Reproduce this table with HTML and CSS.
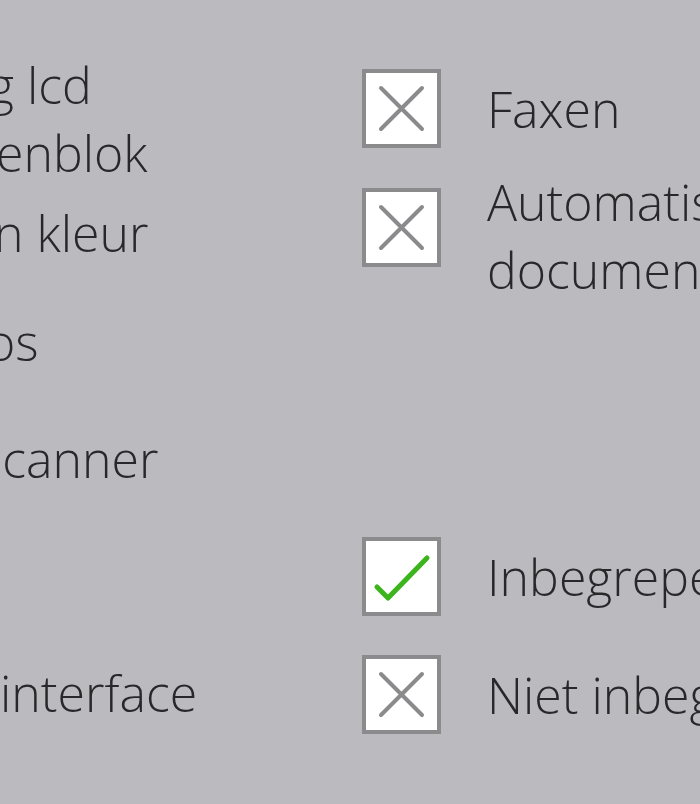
FILE: index.html
```html
<!DOCTYPE html>
<html lang="nl">
<head>
    <meta charset="UTF-8">
    <meta name="viewport" content="width=device-width, initial-scale=1.0">
    <title>Specificaties</title>
    <link rel="stylesheet" href="styles.css">
</head>
<body>
    <div class="page">
        <ul class="features">
            <li class="feature">
                <span class="feature-line feature-lcd">g lcd</span>
                <span class="feature-line feature-keys">enblok</span>
            </li>
            <li class="feature feature-color">n kleur</li>
            <li class="feature feature-wifi">os</li>
            <li class="feature feature-scan">scanner</li>
            <li class="feature feature-iface">interface</li>
        </ul>
        <ul class="legend">
            <li class="legend-row">
                <span class="mark">
                    <svg viewBox="0 0 71 71" width="71" height="71"><path d="M15 15 L56 56 M56 15 L15 56" class="cross"/></svg>
                </span>
                <span class="legend-label">Faxen</span>
            </li>
            <li class="legend-row legend-row-adf">
                <span class="mark">
                    <svg viewBox="0 0 71 71" width="71" height="71"><path d="M15 15 L56 56 M56 15 L15 56" class="cross"/></svg>
                </span>
                <span class="legend-label">Automatische documentinvoer</span>
            </li>
            <li class="legend-row legend-row-yes">
                <span class="mark">
                    <svg viewBox="0 0 71 71" width="71" height="71"><path d="M11 46 L22 57 L61 17" class="check"/></svg>
                </span>
                <span class="legend-label">Inbegrepen</span>
            </li>
            <li class="legend-row legend-row-no">
                <span class="mark">
                    <svg viewBox="0 0 71 71" width="71" height="71"><path d="M15 15 L56 56 M56 15 L15 56" class="cross"/></svg>
                </span>
                <span class="legend-label">Niet inbegrepen</span>
            </li>
        </ul>
    </div>
</body>
</html>
```

FILE: styles.css
```css
html, body {
    margin: 0;
    padding: 0;
    overflow: hidden;
}
body {
    font-family: "Open Sans", "Liberation Sans", sans-serif;
    font-weight: 300;
    font-size: 50px;
    line-height: 68px;
    color: #28282a;
    background-color: #bbbbbf;
    height: 804px;
}
.page {
    display: flex;
    width: 1200px;
}
ul {
    list-style-type: none;
    margin: 0;
    padding: 0;
}
.features {
    width: 362px;
    padding-top: 51px;
    flex-shrink: 0;
    white-space: nowrap;
}
.feature {
    display: block;
}
.feature-line {
    display: block;
}
/* the label column is cut off by the left edge of the frame */
.feature-lcd {
    margin-left: -12px;
}
.feature-keys {
    margin-left: -4px;
}
.feature-color {
    margin-top: 12px;
    margin-left: -6px;
}
.feature-wifi {
    margin-top: 41px;
    margin-left: -14px;
}
.feature-scan {
    margin-top: 49px;
    margin-left: -21px;
}
.feature-iface {
    margin-top: 166px;
    margin-left: 0;
}
.legend {
    padding-top: 69px;
}
.legend-row {
    display: flex;
    align-items: center;
}
.legend-row-adf {
    margin-top: 20px;
    align-items: flex-start;
}
.legend-row-adf .mark {
    margin-top: 20px;
}
.legend-row-yes {
    margin-top: 233px;
}
.legend-row-no {
    margin-top: 39px;
}
.mark {
    display: block;
    box-sizing: border-box;
    width: 79px;
    height: 79px;
    border: 4px solid #8b8b8d;
    background-color: #fff;
    flex-shrink: 0;
}
.mark svg {
    display: block;
}
.cross {
    fill: none;
    stroke: #8b8b8d;
    stroke-width: 4;
    stroke-linecap: round;
}
.check {
    fill: none;
    stroke: #3cb41c;
    stroke-width: 5;
    stroke-linecap: round;
    stroke-linejoin: round;
}
.legend-label {
    display: block;
    width: 420px;
    margin-left: 46px;
}
```
